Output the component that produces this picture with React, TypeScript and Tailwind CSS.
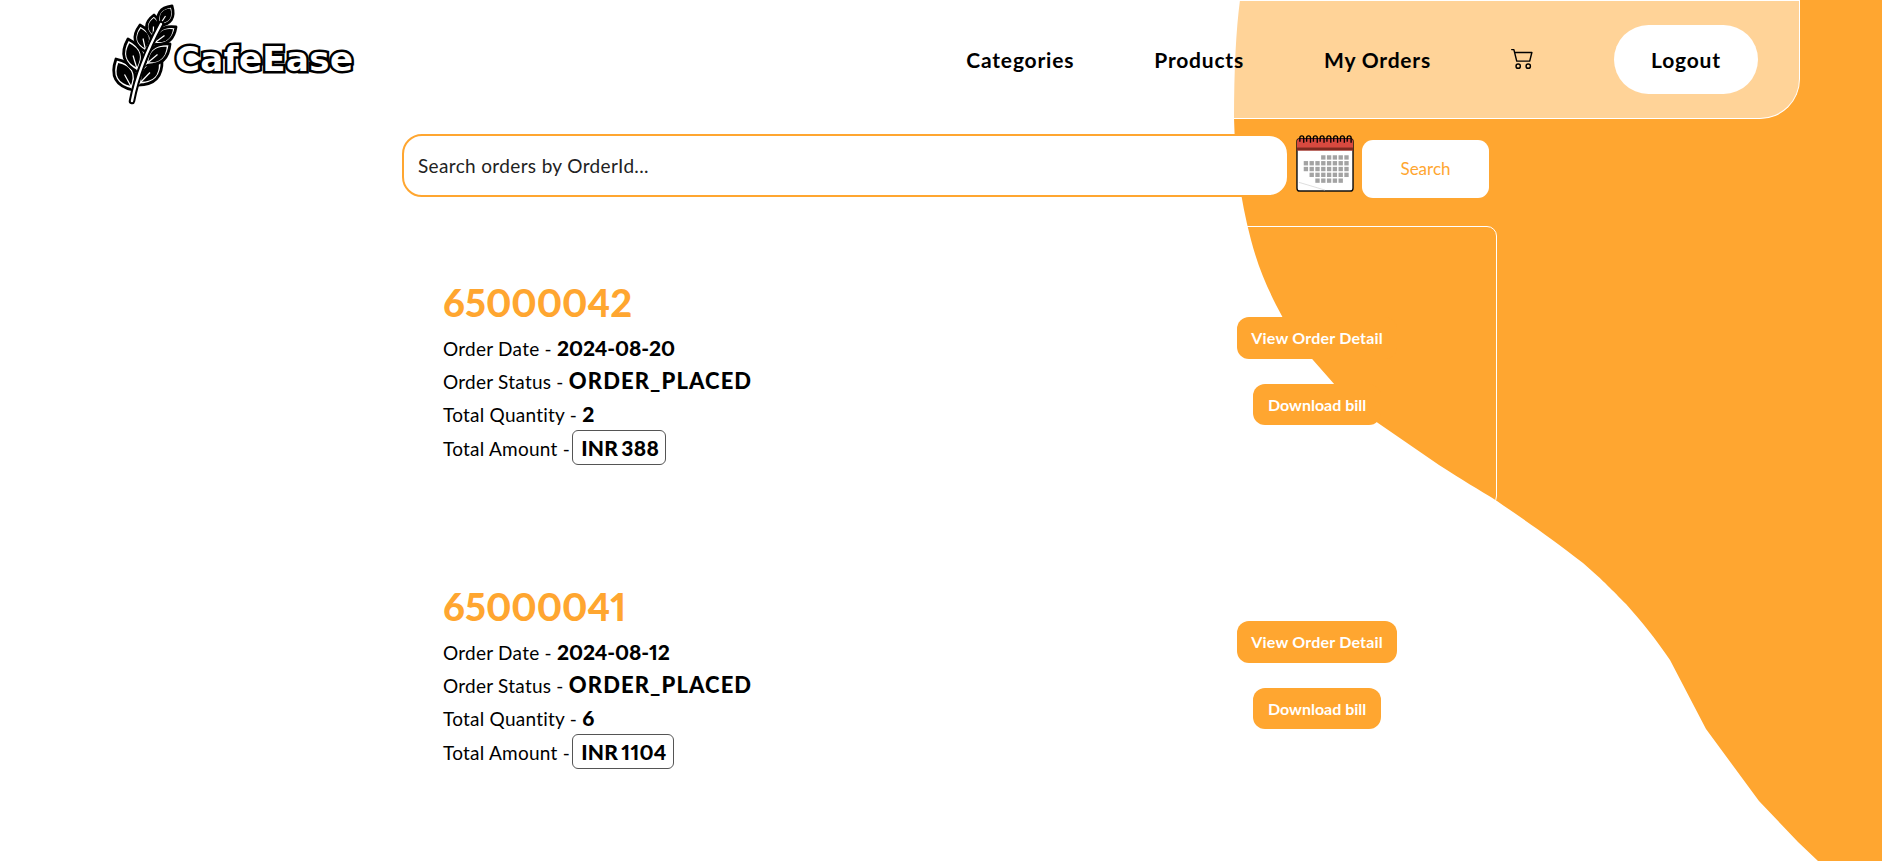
import { BsCart2 } from 'react-icons/bs';

const orders = [
  { id: '65000042', date: '2024-08-20', status: 'ORDER_PLACED', qty: 2, amount: 388 },
  { id: '65000041', date: '2024-08-12', status: 'ORDER_PLACED', qty: 6, amount: 1104 },
];

// base x, base y, tip x, tip y, bulge
const leaves = [
  [30, 88, 13, 57, 20],
  [35, 70, 25, 37, 18],
  [43, 50, 37, 23, 16],
  [50, 36, 51, 13, 14],
  [35, 83, 59, 58, 18],
  [42, 63, 67, 42, 16],
  [50, 42, 73, 25, 14],
  [56, 24, 69, 4, 14],
];

function leafPath([x0, y0, x1, y1, w]: number[], k = 1) {
  const mx = (x0 + x1) / 2;
  const my = (y0 + y1) / 2;
  const len = Math.hypot(x1 - x0, y1 - y0);
  const nx = ((y1 - y0) / len) * w * k;
  const ny = (-(x1 - x0) / len) * w * k;
  const ax = mx + (x0 - mx) * k;
  const ay = my + (y0 - my) * k;
  const bx = mx + (x1 - mx) * k;
  const by = my + (y1 - my) * k;
  return `M${ax} ${ay} Q${mx + nx} ${my + ny} ${bx} ${by} Q${mx - nx} ${my - ny} ${ax} ${ay}Z`;
}

function Logo() {
  return (
    <div className="flex items-center pl-[103px]">
      <svg viewBox="0 0 100 110" className="w-[100px] h-[110px] shrink-0 -mt-[5px]">
        {leaves.map((l, i) => (
          <g key={i}>
            <path d={leafPath(l)} fill="#fff" stroke="#000" strokeWidth="2.8" strokeLinejoin="round" />
            <path d={leafPath(l, 0.74)} fill="#000" />
            <path d={`M${l[0]} ${l[1]} L${(l[0] + l[2]) / 2} ${(l[1] + l[3]) / 2}`} stroke="#fff" strokeWidth="1.2" />
          </g>
        ))}
        <path d="M29 99 C33 78 42 52 58 22" fill="none" stroke="#000" strokeWidth="6.5" strokeLinecap="round" />
        <path d="M29 99 C33 78 42 52 58 22" fill="none" stroke="#fff" strokeWidth="2.4" strokeLinecap="round" />
      </svg>
      <span className="ml-[-28px] mt-[-2px] text-[34px] leading-none font-bold tracking-[0.4px] text-white [font-family:'DejaVu_Sans',sans-serif] [-webkit-text-stroke:5px_#000] [paint-order:stroke_fill]">
        CafeEase
      </span>
    </div>
  );
}

function CalendarIcon() {
  const dots: [number, number][] = [];
  for (let r = 0; r < 5; r++) {
    for (let c = 0; c < 8; c++) {
      if (r === 0 && c < 3) continue;
      if (r === 3 && c === 0) continue;
      if (r === 4 && (c < 2 || c === 7)) continue;
      dots.push([8 + c * 6, 22 + r * 6]);
    }
  }
  return (
    <svg viewBox="0 0 60 60" className="w-[58px] h-[58px] shrink-0">
      <rect x="1" y="5" width="58" height="54" rx="3" fill="#fff" stroke="#111" strokeWidth="1.5" />
      <path d="M1 8 a3 3 0 0 1 3 -3 h52 a3 3 0 0 1 3 3 v9 h-58z" fill="#d8493f" />
      <rect x="1" y="14" width="58" height="3" fill="#7e2a20" />
      {[6, 13, 20, 27, 34, 41, 48, 55].map((x) => (
        <path key={x} d={`M${x - 2} 8 V4 a2 2 0 0 1 4 0 V9`} fill="none" stroke="#000" strokeWidth="1.4" />
      ))}
      {dots.map(([x, y]) => (
        <rect key={`${x}-${y}`} x={x} y={y} width="4.5" height="4.5" fill="#a3a3a3" />
      ))}
      <path d="M3 50 L30 58" stroke="#d4d4d4" strokeWidth="0.8" />
    </svg>
  );
}

function OrderCard({ order }: { order: (typeof orders)[number] }) {
  return (
    <div className="w-[1095px] h-[280px] mb-[24px] border border-white rounded-[10px] pl-[40px] pr-[99px] pt-[53px] flex justify-between proportional-nums">
      <div>
        <h2 className="text-[38px] leading-[44px] font-black text-[#ffa630]">{order.id}</h2>
        <div className="mt-[7px] text-[19px] tracking-[0.25px] text-black">
          <p className="h-[33px] leading-[33px]">
            Order Date - <b className="font-black text-[21px] tracking-[-0.1px]">{order.date}</b>
          </p>
          <p className="h-[33px] leading-[33px]">
            Order Status - <b className="font-black text-[22px] tracking-[1.1px]">{order.status}</b>
          </p>
          <p className="h-[33px] leading-[33px]">
            Total Quantity - <b className="font-black text-[21px]">{order.qty}</b>
          </p>
          <p className="h-[33px] leading-[33px]">
            Total Amount -{' '}
            <b className="font-black text-[21px] [word-spacing:-2px] inline-block leading-[33px] -ml-[3px] pl-[8px] pr-[6px] border border-[#555] rounded-[6px]">
              INR {order.amount}
            </b>
          </p>
        </div>
      </div>
      <div className="flex flex-col items-center gap-[25px] pt-[37px]">
        <button className="h-[42px] px-[14px] rounded-[12px] bg-[#ffa630] text-white text-[16px] tracking-[0.2px] font-bold">
          View Order Detail
        </button>
        <button className="h-[41px] px-[15px] rounded-[12px] bg-[#ffa630] text-white text-[16px] font-bold">
          Download bill
        </button>
      </div>
    </div>
  );
}

export default function App() {
  return (
    <div className="relative h-screen overflow-hidden bg-white [font-family:Lato,sans-serif]">
      {/* background blob */}
      <svg viewBox="0 0 1882 861" className="absolute inset-0 w-full h-full">
        <path
          fill="#ffa630"
          d="M1240 0 C1236 30 1234 70 1234 118 C1235 160 1240 197 1251 240 C1259 270 1268 290 1283 318 C1295 335 1303 348 1313 360 L1335 385 C1350 400 1362 411 1378 423 L1439 465 C1462 480 1478 489 1497 501 C1520 517 1550 537 1583 563 C1605 582 1612 590 1626 604 C1642 622 1655 638 1670 660 L1706 729 L1759 801 L1798 842 L1818 861 H1882 V0Z"
        />
      </svg>

      <div className="relative">
        <nav className="w-[1800px] h-[119px] bg-white/50 border border-l-0 border-white rounded-br-[40px] flex items-center justify-between pr-[41px]">
          <Logo />
          <ul className="flex items-center text-[21px] font-bold tracking-[0.8px] text-black">
            <li className="mr-[80px]">Categories</li>
            <li className="mr-[80px]">Products</li>
            <li className="mr-[80px]">My Orders</li>
            <li className="mr-[80px]">
              <BsCart2 className="w-[23px] h-[23px] -mt-[4px]" />
            </li>
            <li>
              <button className="w-[144px] h-[69px] rounded-[35px] bg-white font-bold">Logout</button>
            </li>
          </ul>
        </nav>

        <div className="ml-[402px] mt-[15px] flex items-start">
          <input
            placeholder="Search orders by OrderId..."
            className="w-[887px] h-[63px] px-[14px] rounded-[20px] bg-white border-2 border-[#ffa630] text-[19px] tracking-[0.35px] outline-none placeholder:text-[#222]"
          />
          <div className="ml-[7px]">
            <CalendarIcon />
          </div>
          <button className="ml-[8px] mt-[6px] w-[127px] h-[58px] rounded-[11px] bg-white text-[#ffa630] text-[17px]">
            Search
          </button>
        </div>

        <div className="ml-[402px] mt-[28px]">
          {orders.map((o) => (
            <OrderCard key={o.id} order={o} />
          ))}
        </div>
      </div>
    </div>
  );
}
